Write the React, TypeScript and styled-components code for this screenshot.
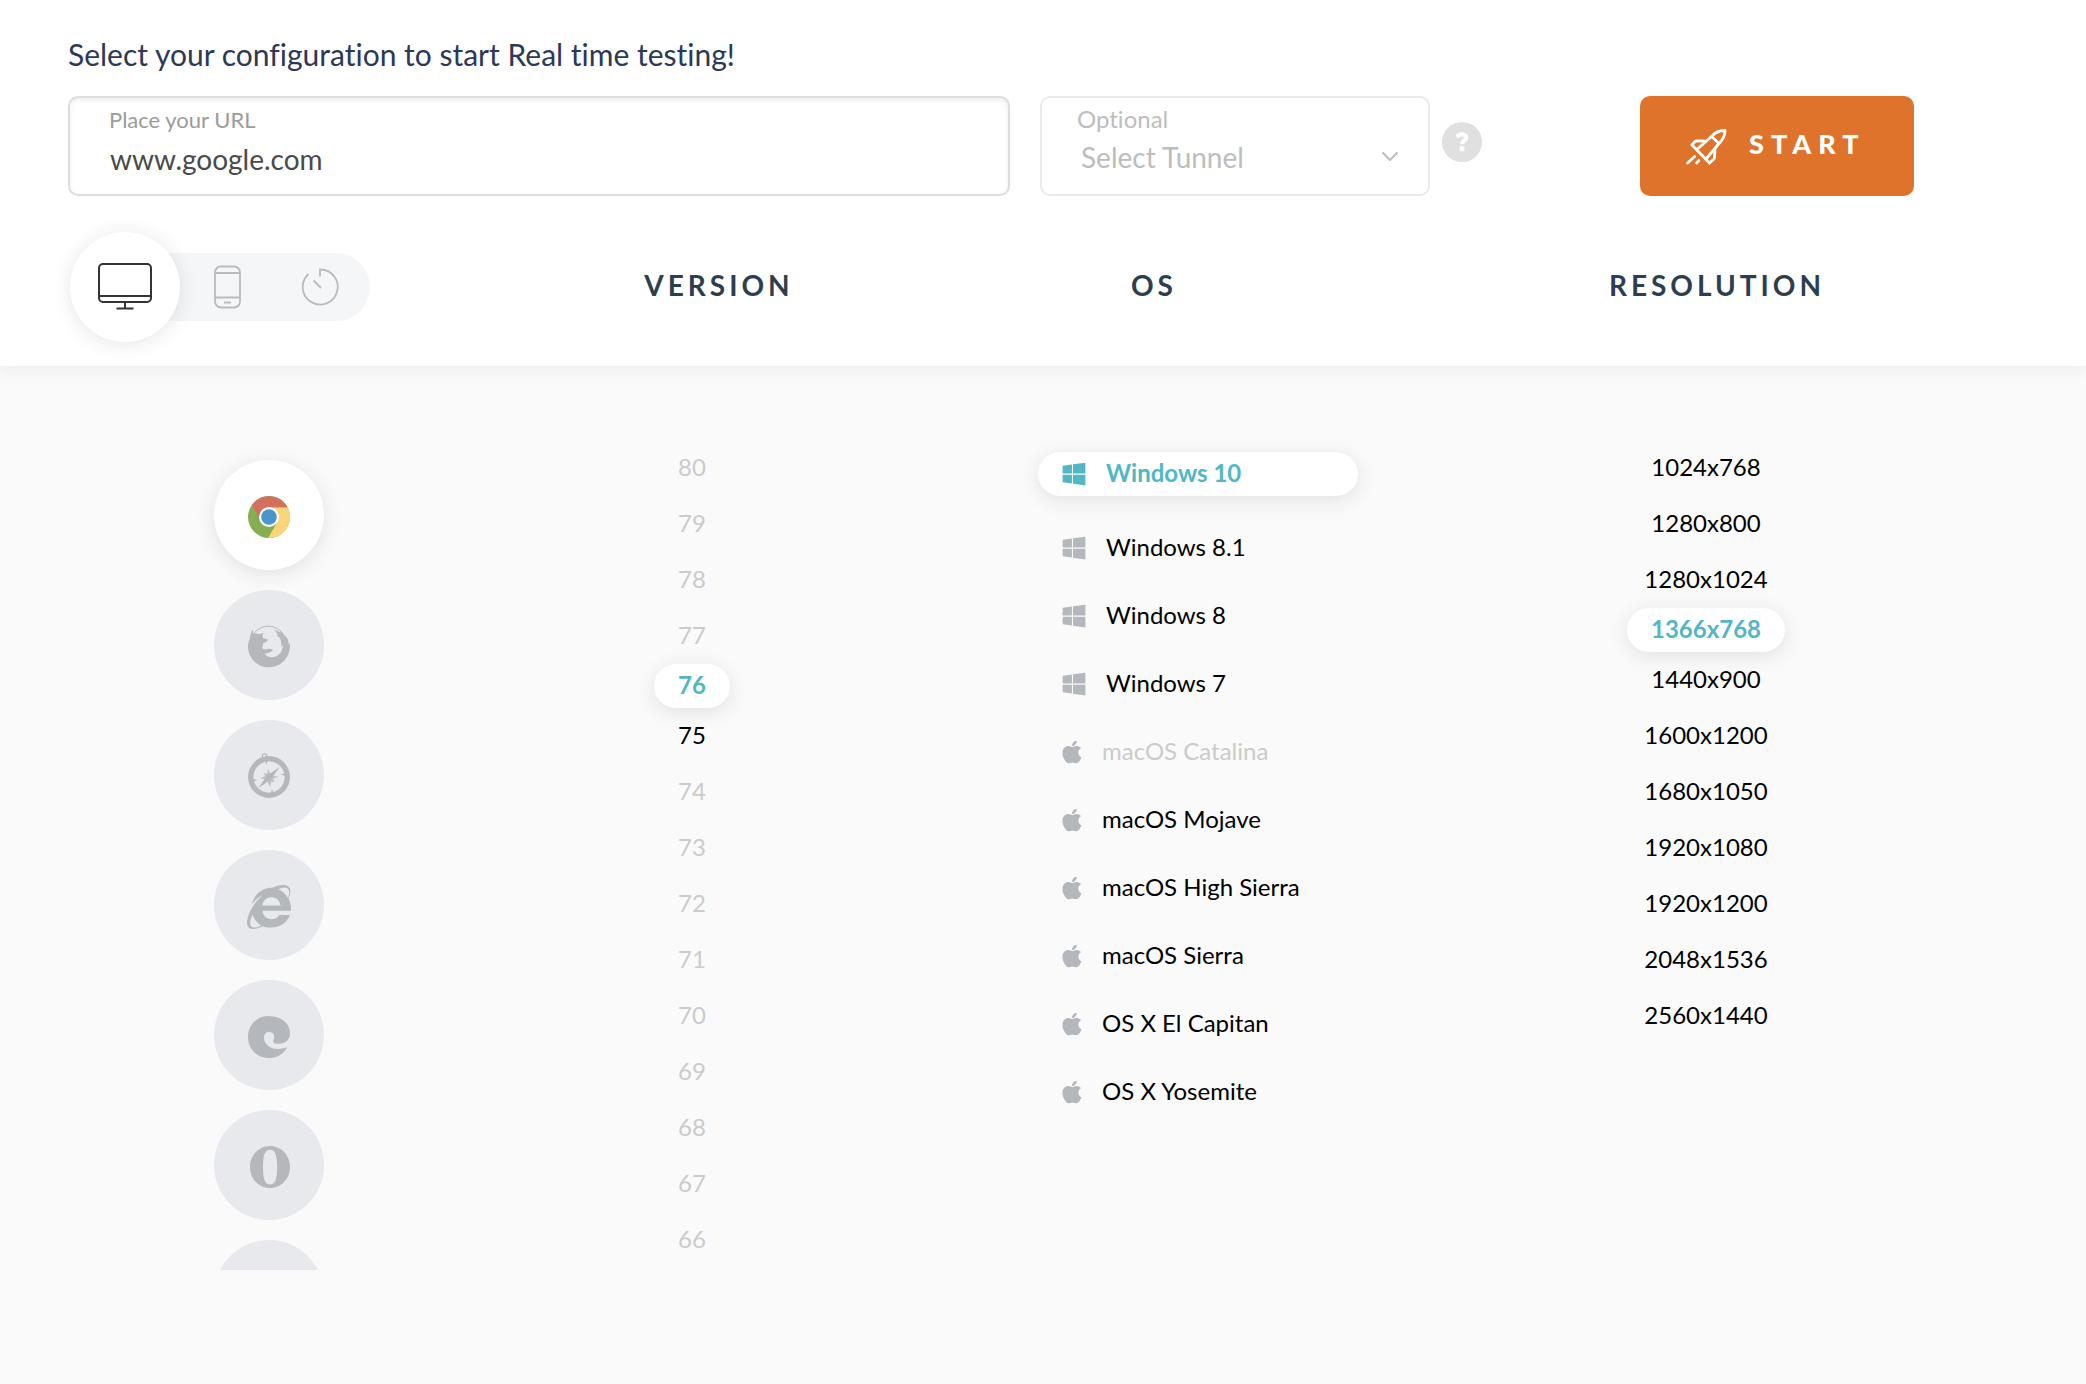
import React, { useState } from "react";
import styled, { createGlobalStyle } from "styled-components";
import { FaInternetExplorer, FaApple, FaWindows } from "react-icons/fa";

const GlobalStyle = createGlobalStyle`
  * { box-sizing: border-box; }
  body { margin: 0; background: #fafafa; }
  button, input, select { font-family: inherit; }
`;

const Page = styled.div`
  min-height: 100vh;
  background: #fafafa;
  color: #000;
  font-family: Lato, "Liberation Sans", sans-serif;
  font-variant-ligatures: none;
`;

const Header = styled.header`
  padding: 36px 0 24px;
  background: #fff;
  box-shadow: 0 2px 16px rgba(0, 0, 0, 0.07);
`;

const Title = styled.h1`
  margin: 0 0 24px;
  padding: 0 68px;
  font-size: 30px;
  line-height: 36px;
  font-weight: 400;
  color: #2c3857;
`;

const LaunchForm = styled.form`
  display: flex;
  align-items: stretch;
  padding: 0 172px 0 68px;
`;

const Field = styled.div<{ $muted?: boolean }>`
  display: flex;
  flex-direction: column;
  height: 100px;
  border: 2px solid ${(p) => (p.$muted ? "#eaeaea" : "#dcdddd")};
  border-radius: 10px;
  background: #fff;
  box-shadow: ${(p) => (p.$muted ? "none" : "inset 0 2px 4px rgba(0, 0, 0, 0.08)")};
  color: ${(p) => (p.$muted ? "#bdbdbd" : "#4a4a4a")};
`;

const UrlField = styled(Field)`
  flex: 1;
  min-width: 0;
  padding: 6px 28px 0 39px;
`;

const TunnelField = styled(Field)`
  flex: 0 0 390px;
  margin-left: 30px;
  padding: 5px 30px 0 35px;
`;

const FieldLabel = styled.label<{ $size: number }>`
  font-size: ${(p) => p.$size}px;
  line-height: 32px;
  color: ${(p) => (p.$size === 22 ? "#9b9b9b" : "inherit")};
`;

const UrlInput = styled.input`
  height: 44px;
  padding: 2px 0 0 1px;
  border: 0;
  outline: 0;
  background: transparent;
  color: inherit;
  font-size: 28px;
`;

const SelectWrap = styled.div`
  display: flex;
  align-items: center;
  height: 44px;

  svg { flex: none; pointer-events: none; }
`;

const TunnelSelect = styled.select`
  flex: 1;
  min-width: 0;
  height: 44px;
  padding: 0 0 0 4px;
  border: 0;
  outline: 0;
  appearance: none;
  background: transparent;
  color: inherit;
  opacity: 1;
  font-size: 28px;
`;

const HelpButton = styled.button`
  display: flex;
  align-items: center;
  justify-content: center;
  align-self: center;
  width: 40px;
  height: 40px;
  margin: 0 0 8px 12px;
  padding: 0;
  border: 0;
  border-radius: 50%;
  background: #e0e0e0;
`;

const StartButton = styled.button`
  display: flex;
  align-items: center;
  gap: 22px;
  width: 274px;
  height: 100px;
  margin-left: 158px;
  padding: 2px 0 0 46px;
  border: 0;
  border-radius: 10px;
  background: #df732b;
  color: #fff;
  font-size: 27px;
  font-weight: 900;
  letter-spacing: 7px;

  span { padding-bottom: 8px; }
`;

const HeadingRow = styled.div`
  display: grid;
  grid-template-columns: 434fr 434fr 436fr 690fr;
  align-items: center;
  margin-top: 36px;
  padding: 0 24px 0 68px;
`;

const Heading = styled.h2`
  margin: 0;
  padding-bottom: 4px;
  font-size: 28px;
  line-height: 36px;
  font-weight: 700;
  letter-spacing: 4px;
  text-align: center;
  color: #2c3e50;
`;

const DeviceTrack = styled.div`
  display: flex;
  align-items: center;
  width: 300px;
  height: 68px;
  margin: 21px 0 21px 2px;
  border-radius: 34px;
  background: #f5f6f8;
`;

const DeviceButton = styled.button<{ $active: boolean }>`
  display: flex;
  flex: ${(p) => (p.$active ? "0 0 110px" : "0 0 92px")};
  align-items: center;
  justify-content: center;
  height: ${(p) => (p.$active ? 110 : 68)}px;
  margin-right: ${(p) => (p.$active ? 2 : 0)}px;
  padding: 0;
  border: 0;
  border-radius: 50%;
  background: ${(p) => (p.$active ? "#fff" : "transparent")};
  color: ${(p) => (p.$active ? "#333" : "#b9bbbd")};
  box-shadow: ${(p) => (p.$active ? "0 2px 20px rgba(0, 0, 0, 0.1)" : "none")};
`;

const Matrix = styled.main`
  display: grid;
  grid-template-columns: 402fr 444fr 568fr 448fr;
  height: 830px;
  margin-top: 74px;
  padding: 0 156px 0 68px;
  overflow: hidden;
`;

const BrowserList = styled.ul`
  display: flex;
  flex-direction: column;
  align-items: center;
  gap: 20px;
  margin: 0;
  padding: 20px 0 0;
  list-style: none;
`;

const BrowserButton = styled.button<{ $active: boolean }>`
  display: flex;
  align-items: center;
  justify-content: center;
  width: 110px;
  height: 110px;
  padding: 4px 0 0;
  border: 0;
  border-radius: 50%;
  background: ${(p) => (p.$active ? "#fff" : "#e7e9ed")};
  color: #b4b8bd;
  box-shadow: ${(p) => (p.$active ? "0 4px 20px rgba(0, 0, 0, 0.1)" : "none")};

  svg { overflow: visible; }
`;

const OptionList = styled.ul`
  display: flex;
  flex-direction: column;
  align-items: center;
  margin: 0;
  padding: 0;
  list-style: none;
`;

const OptionText = styled.span`
  padding-bottom: 4px;
`;

const Option = styled.button<{ $active: boolean }>`
  display: flex;
  align-items: center;
  height: ${(p) => (p.$active ? 44 : 56)}px;
  padding: 0 24px;
  border: 0;
  border-radius: 22px;
  background: ${(p) => (p.$active ? "#fff" : "transparent")};
  color: ${(p) => (p.$active ? "#52b7c4" : "#000")};
  box-shadow: ${(p) => (p.$active ? "0 4px 20px rgba(0, 0, 0, 0.1)" : "none")};
  font-size: 24px;
  font-weight: ${(p) => (p.$active ? 700 : 400)};

  &:disabled { color: #cbcbcb; }
`;

const OsOption = styled(Option)`
  gap: 20px;
  width: 320px;
  height: ${(p) => (p.$active ? 44 : 68)}px;
  margin: ${(p) => (p.$active ? "12px 0 18px" : "0")};

  svg {
    height: 26px;
    color: ${(p) => (p.$active ? "#52b7c4" : "#b4b8bd")};
  }
`;

const WindowsIcon = styled(FaWindows)`
  width: 24px;
`;

const AppleIcon = styled(FaApple)`
  width: 20px;
`;

const DesktopIcon = () => (
  <svg width="54" height="48" viewBox="0 0 54 48" fill="none" stroke="currentColor" strokeWidth="2" aria-hidden="true">
    <rect x="1" y="1" width="52" height="38" rx="4" />
    <path d="M1 33H53M27 39V45M18.500 45.500H35.500" />
  </svg>
);

const PhoneIcon = () => (
  <svg width="28" height="44" viewBox="0 0 28 44" fill="none" stroke="currentColor" strokeWidth="1.800" aria-hidden="true">
    <rect x="1" y="1.500" width="25" height="41" rx="6" />
    <path d="M1 8H26M1 32.500H26M10 37.500H17" />
  </svg>
);

const TimerIcon = () => (
  <svg width="38" height="38" viewBox="0 0 38 38" fill="none" stroke="currentColor" strokeWidth="1.800" aria-hidden="true">
    <path d="M19 8.500V1.500A17.500 17.500 0 1 1 7.500 6" />
    <path d="M12.500 12.500L20 20" />
  </svg>
);

const RocketIcon = () => (
  <svg width="41" height="36" viewBox="0 0 41 36" fill="none" stroke="#fff" strokeWidth="2.800" strokeLinecap="round" strokeLinejoin="round" aria-hidden="true">
    <path d="M25.500 7.500C29.500 3 34.500 1.300 39 1.500C39.300 6 37 10 33 14.500L20 30" />
    <path d="M25.500 7.500L33 14.500M25.500 7.500L11 20.500M6 16L23.500 34" />
    <path d="M6 16L8.500 13C9 12.200 9.800 12 10.500 12L18 11.800M23.500 34L27.500 30.500C28 30 28.500 29.500 28.500 28.500L29 20" />
    <path d="M1.600 34L8.600 27.500M10.600 34L12.800 31.600" />
  </svg>
);

const HelpIcon = () => (
  <svg width="14" height="20" viewBox="0 0 14 20" fill="none" aria-hidden="true">
    <path d="M2 5.200C3.200 3 4.800 2.300 6.800 2.300C9.500 2.300 11.300 3.800 11.300 5.800C11.300 8.600 7 8.600 7 12.200" stroke="#fff" strokeWidth="4.200" />
    <rect x="4.600" y="14.200" width="4.800" height="5" fill="#fff" />
  </svg>
);

const ChevronIcon = () => (
  <svg width="16" height="10" viewBox="0 0 16 10" fill="none" stroke="#bdbdbd" strokeWidth="2" strokeLinecap="round" aria-hidden="true">
    <path d="M1 1L8 8L15 1" />
  </svg>
);

const ChromeIcon = () => (
  <svg width="42" height="42" viewBox="0 0 42 42" aria-hidden="true">
    <circle cx="21" cy="21" r="21" fill="#84ae50" />
    <path d="M21 11.300H39.600A21 21 0 0 1 20 42L29.700 25.500L21 21Z" fill="#fbd579" />
    <path d="M39.600 11.300A21 21 0 0 0 4 9L12.300 24L21 21V11.300Z" fill="#d36f5e" />
    <circle cx="21" cy="21" r="10" fill="#fff" />
    <circle cx="21" cy="21" r="7.800" fill="#4a96c9" />
  </svg>
);

const FirefoxIcon = () => (
  <svg width="42" height="42" viewBox="0 0 42 42" fill="currentColor" aria-hidden="true">
    <path d="M4.700 3.700L5.300 7.500C7 7 9 7.500 11 8.300L16 6.800C14.500 8.500 14.300 10.500 15 12C16.500 12.700 18.500 12.700 19.500 13.500C20 14.500 19 15.800 16 16.800C14.500 17.500 15 19.500 14.800 20.300C13.500 22 15 23.800 17.500 23.300C20 22.800 21 22 24.500 23.500C25 24.500 24.500 25.200 23 25.800C21 26.500 20.500 27.700 16.500 27.500C18.500 30.500 22 31.800 26 31C31 30 35 25 35 19L33.500 21.500C33.500 16 33 13.500 31 11L28.500 9.500L30 8.500L26.500 3.800C30 4.500 31.500 6 33 8C32.500 6.500 32 5 31 4C35 6 36.500 9 37 11.500L37 9C40 13 41 16 40.500 18.500L42 17.500C42.500 32 33 41.300 21 41.300C9 41.300 0 32 0 20.500C0 17 0.700 14.500 2.200 12C2.200 9 2.800 6.500 4.700 3.700Z" />
    <path d="M6 7C14 -2 26 -1.500 33 5.500" fill="none" stroke="currentColor" />
  </svg>
);

const SafariIcon = () => (
  <svg width="42" height="42" viewBox="0 0 42 42" fill="currentColor" aria-hidden="true">
    <circle cx="21" cy="21" r="18.300" fill="none" stroke="currentColor" strokeWidth="5.300" />
    <circle cx="16.500" cy="0" r="2.200" fill="none" stroke="currentColor" strokeWidth="1.200" />
    <path d="M31.500 11.200L23 23.500L10.500 32L19 19.500Z" />
    <path d="M20 13L22.500 18L26.500 17L25 20L30.500 20.500L25 23L26.500 26.500L23.500 25.500L22 31L19.500 25.500L16 26.500L17 23L12 22.500L17 20L15.500 16.500L19 18Z" opacity="0.800" />
    <path d="M17 5L18.500 9L19.500 5ZM37 17L33 18.500L37 20ZM5 23L9 24L5 26ZM23 37L24 33L25.500 37Z" />
  </svg>
);

const EdgeIcon = () => (
  <svg width="42" height="42" viewBox="0 0 42 42" fill="currentColor" aria-hidden="true">
    <path d="M39 31.300C36 37.500 30 42 21 42C9 42 0 33 0 21C0 9 9 0 20 0C33 0 42 7 42 17C42 24 37 27.800 31 27.800C28 27.800 25 27 25 25.500C25 24.500 26.300 23.500 26.300 21C26.300 18 24 15.700 21 15.700C18 15.700 16 18.500 16 22C16 28 22 33 30 33C34 33 37 32 39 31.300Z" />
  </svg>
);

const OperaIcon = () => (
  <svg width="42" height="42" viewBox="0 0 42 42" fill="currentColor" fillRule="evenodd" aria-hidden="true">
    <path d="M22 0C33.500 0 42 9.500 42 21C42 32.500 33.500 42 22 42C10.500 42 2 32.500 2 21C2 9.500 10.500 0 22 0ZM22 3.700C17 3.700 15 9 15 21C15 33 17 38.500 22 38.500C27 38.500 29.200 33 29.200 21C29.200 9 27 3.700 22 3.700Z" />
  </svg>
);

const browsers = [
  { name: "Chrome", icon: <ChromeIcon /> },
  { name: "Firefox", icon: <FirefoxIcon /> },
  { name: "Safari", icon: <SafariIcon /> },
  { name: "Internet Explorer", icon: <FaInternetExplorer size={44} /> },
  { name: "Edge", icon: <EdgeIcon /> },
  { name: "Opera", icon: <OperaIcon /> },
  { name: "Yandex", icon: null },
];

const devices = [
  { name: "Desktop", icon: <DesktopIcon /> },
  { name: "Mobile", icon: <PhoneIcon /> },
  { name: "Recent", icon: <TimerIcon /> },
];

const versions = [80, 79, 78, 77, 76, 75, 74, 73, 72, 71, 70, 69, 68, 67, 66].map(String);
const enabledVersions = ["76", "75"];

const systems = [
  "Windows 10", "Windows 8.1", "Windows 8", "Windows 7", "macOS Catalina",
  "macOS Mojave", "macOS High Sierra", "macOS Sierra", "OS X El Capitan", "OS X Yosemite",
];

const resolutions = [
  "1024x768", "1280x800", "1280x1024", "1366x768", "1440x900", "1600x1200",
  "1680x1050", "1920x1080", "1920x1200", "2048x1536", "2560x1440",
];

export default function App() {
  const [url, setUrl] = useState("www.google.com");
  const [device, setDevice] = useState("Desktop");
  const [browser, setBrowser] = useState("Chrome");
  const [version, setVersion] = useState("76");
  const [system, setSystem] = useState("Windows 10");
  const [resolution, setResolution] = useState("1366x768");

  return (
    <Page>
      <GlobalStyle />
      <Header>
        <Title>Select your configuration to start Real time testing!</Title>
        <LaunchForm onSubmit={(e) => e.preventDefault()}>
          <UrlField>
            <FieldLabel htmlFor="url" $size={22}>Place your URL</FieldLabel>
            <UrlInput id="url" type="text" value={url} onChange={(e) => setUrl(e.target.value)} />
          </UrlField>
          <TunnelField $muted>
            <FieldLabel htmlFor="tunnel" $size={24}>Optional</FieldLabel>
            <SelectWrap>
              <TunnelSelect id="tunnel" disabled>
                <option>Select Tunnel</option>
              </TunnelSelect>
              <ChevronIcon />
            </SelectWrap>
          </TunnelField>
          <HelpButton type="button" aria-label="Tunnel help"><HelpIcon /></HelpButton>
          <StartButton type="submit"><RocketIcon /><span>START</span></StartButton>
        </LaunchForm>
        <HeadingRow>
          <DeviceTrack>
            {devices.map((d) => (
              <DeviceButton key={d.name} type="button" aria-label={d.name} aria-pressed={device === d.name} $active={device === d.name} onClick={() => setDevice(d.name)}>
                {d.icon}
              </DeviceButton>
            ))}
          </DeviceTrack>
          <Heading>VERSION</Heading>
          <Heading>OS</Heading>
          <Heading>RESOLUTION</Heading>
        </HeadingRow>
      </Header>
      <Matrix>
        <BrowserList>
          {browsers.map((b) => (
            <li key={b.name}>
              <BrowserButton type="button" aria-label={b.name} aria-pressed={browser === b.name} $active={browser === b.name} onClick={() => setBrowser(b.name)}>
                {b.icon}
              </BrowserButton>
            </li>
          ))}
        </BrowserList>
        <OptionList>
          {versions.map((v) => (
            <li key={v}>
              <Option type="button" disabled={!enabledVersions.includes(v)} aria-pressed={version === v} $active={version === v} onClick={() => setVersion(v)}>
                <OptionText>{v}</OptionText>
              </Option>
            </li>
          ))}
        </OptionList>
        <OptionList>
          {systems.map((s) => (
            <li key={s}>
              <OsOption type="button" disabled={s === "macOS Catalina"} aria-pressed={system === s} $active={system === s} onClick={() => setSystem(s)}>
                {s.startsWith("Windows") ? <WindowsIcon /> : <AppleIcon />}
                <OptionText>{s}</OptionText>
              </OsOption>
            </li>
          ))}
        </OptionList>
        <OptionList>
          {resolutions.map((r) => (
            <li key={r}>
              <Option type="button" aria-pressed={resolution === r} $active={resolution === r} onClick={() => setResolution(r)}>
                <OptionText>{r}</OptionText>
              </Option>
            </li>
          ))}
        </OptionList>
      </Matrix>
    </Page>
  );
}
